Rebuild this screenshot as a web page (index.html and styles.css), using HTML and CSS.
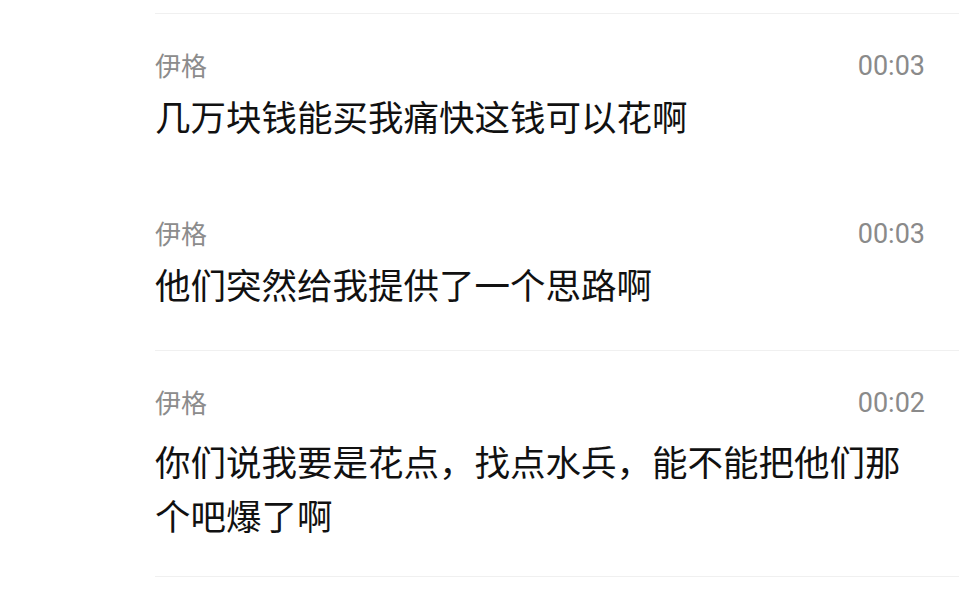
FILE: index.html
```html
<!DOCTYPE html>
<html lang="zh-CN">
<head>
  <meta charset="UTF-8">
  <meta name="viewport" content="width=device-width, initial-scale=1">
  <title>弹幕列表</title>
  <link rel="stylesheet" href="styles.css">
</head>
<body>
  <div class="list">
    <div class="msg divided">
      <div class="meta">
        <span class="name">伊格</span>
        <span class="time">00:03</span>
      </div>
      <p class="text">几万块钱能买我痛快这钱可以花啊</p>
    </div>

    <div class="msg">
      <div class="meta">
        <span class="name">伊格</span>
        <span class="time">00:03</span>
      </div>
      <p class="text">他们突然给我提供了一个思路啊</p>
    </div>

    <div class="msg divided long">
      <div class="meta">
        <span class="name">伊格</span>
        <span class="time">00:02</span>
      </div>
      <p class="text">你们说我要是花点，找点水兵，能不能把他们那个吧爆了啊</p>
    </div>

    <div class="msg divided"></div>
  </div>
</body>
</html>
```

FILE: styles.css
```css
body {
  margin: 0;
  background: #fff;
  font-family: "Noto Sans CJK SC", "Noto Sans", sans-serif;
  overflow: hidden;
}
.list {
  padding-top: 13px;
}
.msg {
  margin-left: 155px;
  padding: 33px 34px 39px 0;
}
.divided {
  border-top: 1px solid #f0f0f0;
}
.meta {
  display: flex;
  justify-content: space-between;
  align-items: baseline;
  height: 36px;
  line-height: 36px;
}
.name {
  font-size: 26px;
  color: #8c8c8c;
}
.time {
  font-family: Roboto, "Liberation Sans", sans-serif;
  font-size: 27px;
  color: #8a8a8a;
  position: relative;
  top: -1px;
}
.text {
  margin: 6px 0 0;
  font-size: 35.5px;
  line-height: 54px;
  color: #111;
}
/* wrapped messages sit a little lower under the name */
.long {
  padding-bottom: 34px;
}
.long .text {
  margin-top: 14px;
}
```
